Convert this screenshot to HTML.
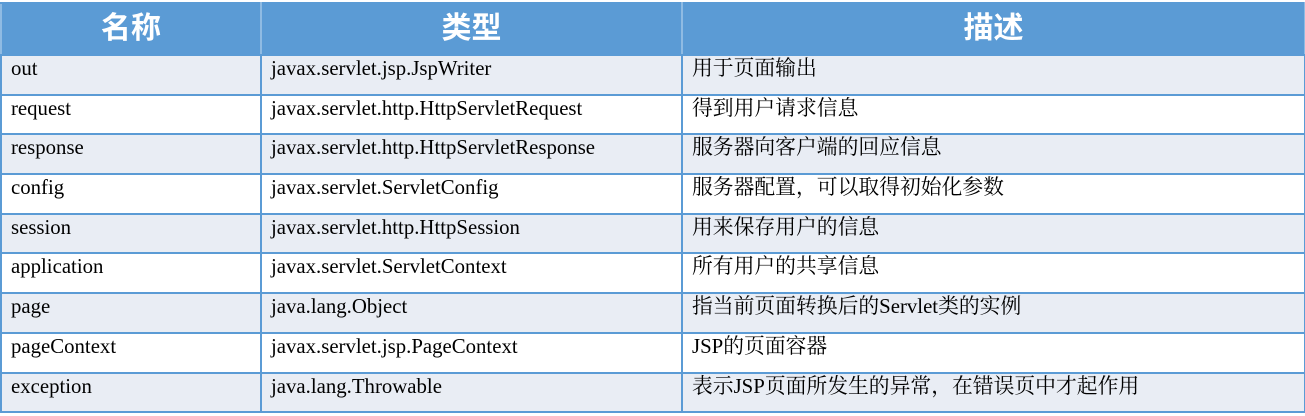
<!DOCTYPE html>
<html><head><meta charset="utf-8"><style>
body{margin:0;width:1305px;height:416px;background:#fff;overflow:hidden}
table{position:absolute;left:0;top:2px;border-collapse:collapse;table-layout:fixed;width:1304px}
td,th{border:2px solid #5b9bd5;padding:0 0 0 9px;vertical-align:top;font-family:"Liberation Serif","Noto Serif CJK SC","Noto Sans CJK SC",serif;font-size:20.8px;color:#000;line-height:24px;white-space:nowrap}
th{background:#5b9bd5;color:#fff;height:50px;font-family:"Liberation Sans","Noto Sans CJK SC",sans-serif;font-size:30px;font-weight:bold;text-align:center;vertical-align:middle;padding:0;border-left-color:#8fbbe3;border-right-color:#8fbbe3}
td{height:36.7px;padding-top:1px}
tr.a td{background:#e9edf4}
tr.b td{background:#fff}
</style></head><body>
<table>
<colgroup><col style="width:260px"><col style="width:421px"><col style="width:623px"></colgroup>
<tr><th>名称</th><th>类型</th><th>描述</th></tr>
<tr class="a"><td>out</td><td>javax.servlet.jsp.JspWriter</td><td>用于页面输出</td></tr>
<tr class="b"><td>request</td><td>javax.servlet.http.HttpServletRequest</td><td>得到用户请求信息</td></tr>
<tr class="a"><td>response</td><td>javax.servlet.http.HttpServletResponse</td><td>服务器向客户端的回应信息</td></tr>
<tr class="b"><td>config</td><td>javax.servlet.ServletConfig</td><td>服务器配置，可以取得初始化参数</td></tr>
<tr class="a"><td>session</td><td>javax.servlet.http.HttpSession</td><td>用来保存用户的信息</td></tr>
<tr class="b"><td>application</td><td>javax.servlet.ServletContext</td><td>所有用户的共享信息</td></tr>
<tr class="a"><td>page</td><td>java.lang.Object</td><td>指当前页面转换后的Servlet类的实例</td></tr>
<tr class="b"><td>pageContext</td><td>javax.servlet.jsp.PageContext</td><td>JSP的页面容器</td></tr>
<tr class="a"><td>exception</td><td>java.lang.Throwable</td><td>表示JSP页面所发生的异常，在错误页中才起作用</td></tr>
</table>
</body></html>
